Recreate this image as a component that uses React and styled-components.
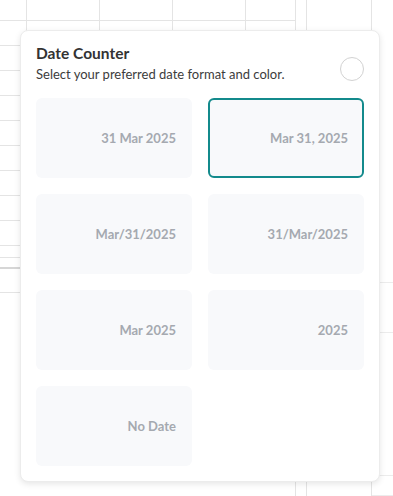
import React, { useState } from 'react';
import styled, { createGlobalStyle } from 'styled-components';

const GlobalStyle = createGlobalStyle`
    html, body {
        margin: 0;
        padding: 0;
        background: #ffffff;
    }
    body {
        font-family: "Lato", "Noto Sans", sans-serif;
    }
`

const formats = ['31 Mar 2025', 'Mar 31, 2025', 'Mar/31/2025', '31/Mar/2025', 'Mar 2025', '2025', 'No Date'];

const leftCols = [27, 73, 73, 73, 49];
const leftRows = [21, 25, 25, 25, 25, 25, 25, 25, 25, 25, 12, 11, 24];

const App = () => {
    const [selected, setSelected] = useState('Mar 31, 2025');

    return (
        <>
            <GlobalStyle />
            <Page>
                <Sheet>
                    <LeftPane>
                        {leftRows.map((h, r) => (
                            <SheetRow key={r} $height={h} $thick={r === 11}>
                                {leftCols.map((w, c) => (
                                    <Cell key={c} $width={w} />
                                ))}
                            </SheetRow>
                        ))}
                    </LeftPane>
                    <RightPane>
                        <RightCol $width={64} />
                        <RightCol $width={23} $split>
                            <RightCell $height={283} />
                            <RightCell $height={50} />
                            <RightCell $height={143} />
                            <RightCell $height={20} />
                        </RightCol>
                    </RightPane>
                </Sheet>

                <Popover>
                    <Header>
                        <HeaderText>
                            <Title>Date Counter</Title>
                            <Subtitle>Select your preferred date format and color.</Subtitle>
                        </HeaderText>
                        <ColorDot type="button" aria-label="Pick color" />
                    </Header>
                    <FormatGrid>
                        {formats.map((f) => (
                            <FormatCard
                                key={f}
                                $active={selected === f}
                                onClick={() => setSelected(f)}
                            >
                                {f}
                            </FormatCard>
                        ))}
                    </FormatGrid>
                </Popover>
            </Page>
        </>
    );
};

export default App;

// Styled Components
const Page = styled.div`
    position: relative;
    width: 393px;
    height: 496px;
    overflow: hidden;
`

const Sheet = styled.div`
    display: flex;
    gap: 10px;
    height: 100%;
`

const LeftPane = styled.div`
    display: flex;
    flex-direction: column;
    width: 296px;
    border-right: 1px solid #e4e4e4;
    box-sizing: border-box;
`

const SheetRow = styled.div`
    display: flex;
    height: ${(p) => p.$height}px;
    box-sizing: border-box;
    border-bottom: ${(p) => (p.$thick ? '2px solid #d6d6d6' : '1px solid #e4e4e4')};
`

const Cell = styled.div`
    width: ${(p) => p.$width}px;
    box-sizing: border-box;
    border-right: 1px solid #e4e4e4;

    &:last-child {
        border-right: none;
    }
`

const RightPane = styled.div`
    display: flex;
    flex: 1;
    border-left: 1px solid #e4e4e4;
`

const RightCol = styled.div`
    display: flex;
    flex-direction: column;
    width: ${(p) => p.$width}px;
    border-right: ${(p) => (p.$split ? 'none' : '1px solid #e4e4e4')};
`

const RightCell = styled.div`
    height: ${(p) => p.$height}px;
    box-sizing: border-box;
    border-bottom: 1px solid #ececec;
`

const Popover = styled.div`
    position: absolute;
    top: 30px;
    left: 20px;
    width: 360px;
    box-sizing: border-box;
    padding: 12px 15px 15px;
    background: #ffffff;
    border: 1px solid #ececec;
    border-radius: 8px;
    box-shadow: 0 2px 6px rgba(0, 0, 0, 0.1);
`

const Header = styled.div`
    display: flex;
    align-items: flex-end;
    justify-content: space-between;
    margin-bottom: 15px;
`

const HeaderText = styled.div`
    display: flex;
    flex-direction: column;
    gap: 2px;
`

const Title = styled.h2`
    margin: 0;
    font-size: 15.5px;
    line-height: 20px;
    font-weight: 700;
    color: #333333;
`

const Subtitle = styled.p`
    margin: 0;
    font-size: 13px;
    line-height: 18px;
    color: #3c3c3c;
`

const ColorDot = styled.button`
    width: 24px;
    height: 24px;
    padding: 0;
    margin-bottom: 2px;
    border-radius: 50%;
    border: 1px solid #d2d2d2;
    background: #ffffff;
    cursor: pointer;
`

const FormatGrid = styled.div`
    display: grid;
    grid-template-columns: 1fr 1fr;
    gap: 16px;
`

const FormatCard = styled.button`
    display: flex;
    align-items: center;
    justify-content: flex-end;
    height: 80px;
    padding: 0 14px;
    box-sizing: border-box;
    border-radius: 6px;
    border: 2px solid ${(p) => (p.$active ? '#138a8c' : 'transparent')};
    background: #f8f9fb;
    font-family: "Lato", "Noto Sans", sans-serif;
    font-size: 13px;
    font-weight: 700;
    color: #a5a9b0;
    cursor: pointer;
`
